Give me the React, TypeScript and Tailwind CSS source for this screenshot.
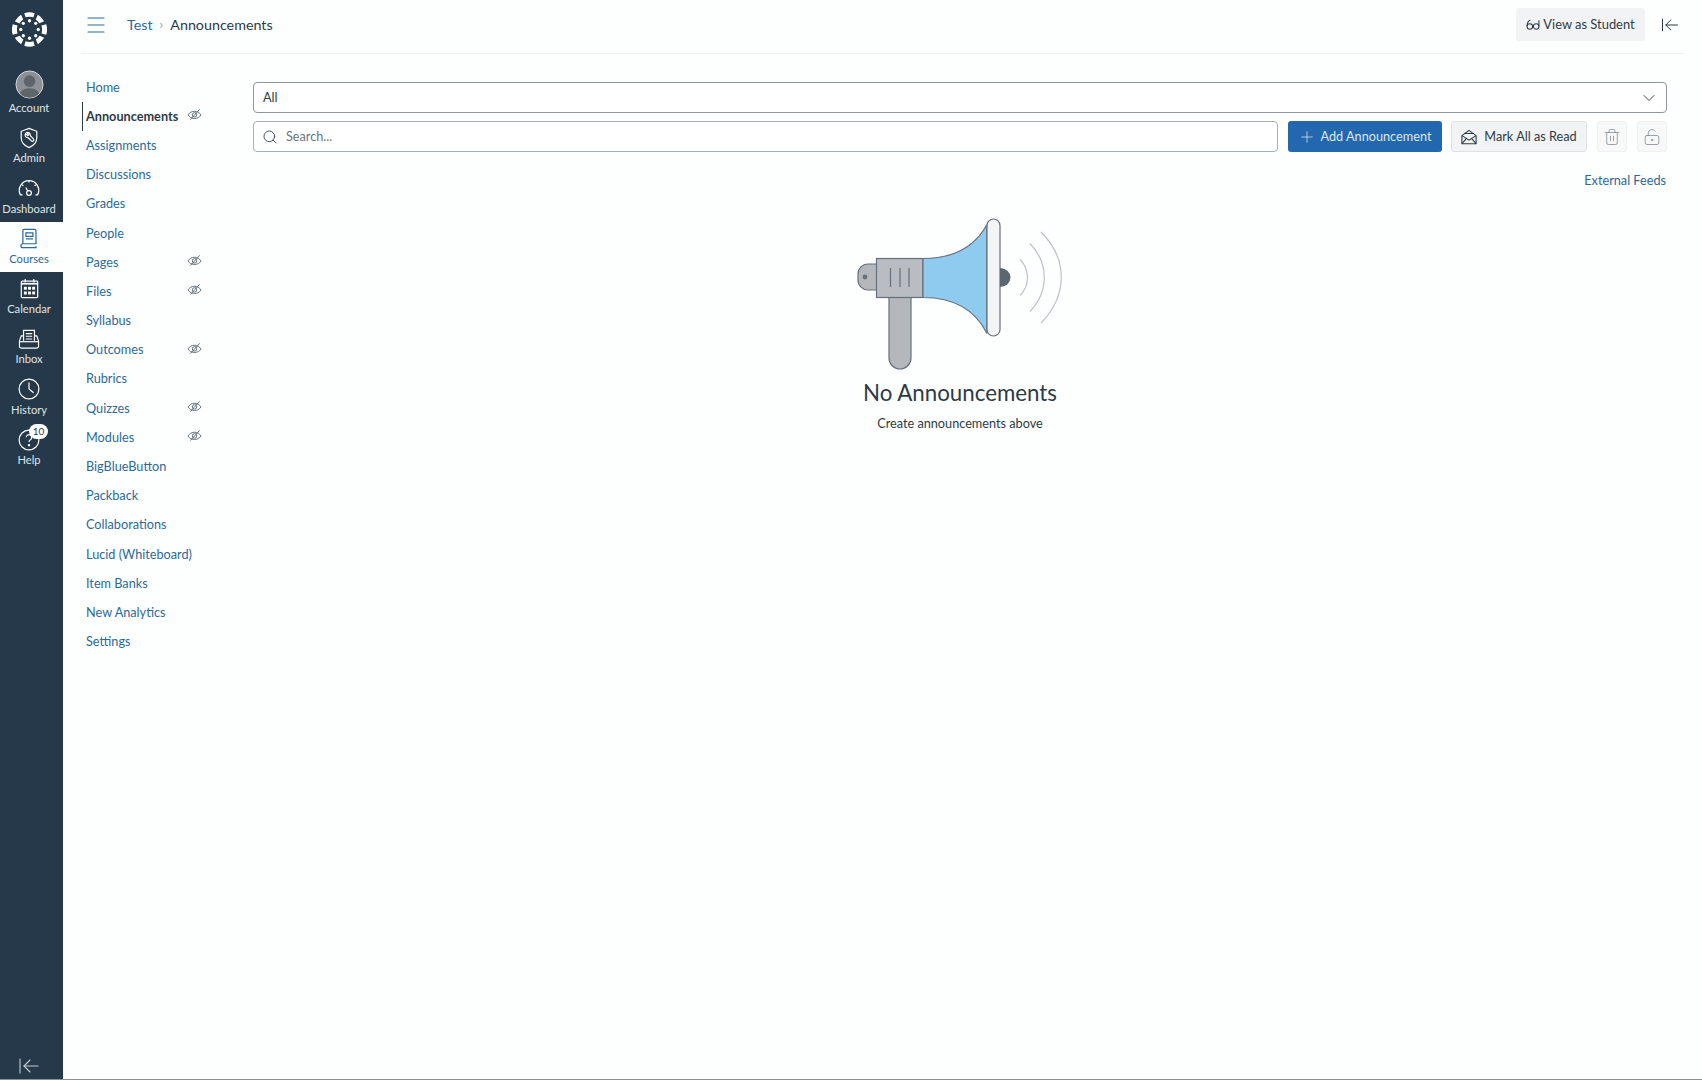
import { ReactNode } from "react";
import { ArrowLeftToLine, ChevronDown, LockKeyholeOpen, Menu, Plus, Search, Trash2 } from "lucide-react";

const courseNav = [
    { label: "Home" },
    { label: "Announcements", hidden: true, active: true },
    { label: "Assignments" },
    { label: "Discussions" },
    { label: "Grades" },
    { label: "People" },
    { label: "Pages", hidden: true },
    { label: "Files", hidden: true },
    { label: "Syllabus" },
    { label: "Outcomes", hidden: true },
    { label: "Rubrics" },
    { label: "Quizzes", hidden: true },
    { label: "Modules", hidden: true },
    { label: "BigBlueButton" },
    { label: "Packback" },
    { label: "Collaborations" },
    { label: "Lucid (Whiteboard)" },
    { label: "Item Banks" },
    { label: "New Analytics" },
    { label: "Settings" },
];

const CanvasLogo = () => (
    <svg viewBox="0 0 36 36" className="h-[35px] w-[35px]" fill="#fff">
        <path d="M12.6 1.2a17.6 17.6 0 0 1 10.8 0l-1.4 4.3a13 13 0 0 0-8 0z" />
        <path d="M26.6 2.9a17.6 17.6 0 0 1 6.5 6.5l-4.9 2.1a13 13 0 0 0-3.9-3.9z" />
        <path d="M35.2 12.6a17.6 17.6 0 0 1 0 10.8l-4.9-1.4a13 13 0 0 0 0-8z" />
        <path d="M33.1 26.6a17.6 17.6 0 0 1-6.5 6.5l-2.1-4.9a13 13 0 0 0 3.9-3.9z" />
        <path d="M23.4 34.8a17.6 17.6 0 0 1-10.8 0l1.4-4.6a13 13 0 0 0 8 0z" />
        <path d="M9.4 33.1a17.6 17.6 0 0 1-6.5-6.5l4.9-2.1a13 13 0 0 0 3.9 3.9z" />
        <path d="M.8 23.4a17.6 17.6 0 0 1 0-10.8l4.9 1.4a13 13 0 0 0 0 8z" />
        <path d="M2.9 9.4a17.6 17.6 0 0 1 6.5-6.5l2.1 4.9a13 13 0 0 0-3.9 3.9z" />
        <circle cx="18" cy="9" r="1.7" />
        <circle cx="24.4" cy="11.6" r="1.7" />
        <circle cx="27" cy="18" r="1.7" />
        <circle cx="24.4" cy="24.4" r="1.7" />
        <circle cx="18" cy="27" r="1.7" />
        <circle cx="11.6" cy="24.4" r="1.7" />
        <circle cx="9" cy="18" r="1.7" />
        <circle cx="11.6" cy="11.6" r="1.7" />
    </svg>
);

const AccountIcon = () => (
    <svg viewBox="0 0 30 30" className="h-[29px] w-[29px]">
        <defs>
            <clipPath id="avatar">
                <circle cx="15" cy="15" r="13.6" />
            </clipPath>
        </defs>
        <circle cx="15" cy="15" r="14" fill="#8b9096" stroke="#d6dade" strokeWidth="1" />
        <g clipPath="url(#avatar)" fill="#5f6468">
            <circle cx="15" cy="11.5" r="6" />
            <path d="M4 30c0-8 5-11 11-11s11 3 11 11z" />
        </g>
    </svg>
);

const AdminIcon = () => (
    <svg viewBox="0 0 24 24" className="h-[22px] w-[22px]" fill="none" stroke="#fff" strokeWidth="1.3">
        <path d="M12 1.5l8.5 3.2v7c0 5-3.5 8.6-8.500 10.800-5-2.200-8.500-5.800-8.500-10.800v-7z" />
        <path d="M8.200 7.200l2.400 2.200 1-1-2.200-2.400a3 3 0 0 1 4 3.400l3.400 3.600a1.500 1.500 0 0 1-2.200 2.200l-3.500-3.500a3 3 0 0 1-2.900-4.500z" />
    </svg>
);

const DashboardIcon = () => (
    <svg viewBox="0 0 24 20" className="h-[20px] w-[22px]" fill="none" stroke="#fff" strokeWidth="1.3">
        <path d="M5 17.500H2.600A10.600 10.600 0 0 1 12 2a10.600 10.600 0 0 1 9.400 15.500H19" />
        <path d="M12 2v2M4.500 6.500l1.400 1.200M19.500 6.500l-1.400 1.200" />
        <circle cx="12" cy="15.500" r="2.600" />
        <path d="M8.500 9.500l2.200 3.800" />
    </svg>
);

const CoursesIcon = () => (
    <svg viewBox="0 0 20 24" className="h-[21px] w-[18px]" fill="none" stroke="#2d6a97" strokeWidth="1.400">
        <path d="M3 18V3a1.500 1.500 0 0 1 1.500-1.500h12A1.500 1.500 0 0 1 18 3v15z" />
        <path d="M3 18a2.200 2.200 0 0 0 0 4.400h15v-1.600" />
        <path d="M6.500 5.500h8v4h-8zM6.500 12.500h8" />
    </svg>
);

const CalendarIcon = () => (
    <svg viewBox="0 0 22 24" className="h-[21px] w-[19px]" fill="none" stroke="#fff" strokeWidth="1.400">
        <rect x="1.500" y="3.500" width="19" height="19" rx="1" />
        <path d="M6 1v4M16 1v4" />
        <path d="M1.500 6.500h19" strokeWidth="2" />
        <g fill="#fff" stroke="none">
            <rect x="4.500" y="10" width="3.400" height="3.400" />
            <rect x="9.300" y="10" width="3.400" height="3.400" />
            <rect x="14.100" y="10" width="3.400" height="3.400" />
            <rect x="4.500" y="15.500" width="3.400" height="3.400" />
            <rect x="9.300" y="15.500" width="3.400" height="3.400" />
            <rect x="14.100" y="15.500" width="3.400" height="3.400" />
        </g>
    </svg>
);

const InboxIcon = () => (
    <svg viewBox="0 0 24 22" className="h-[20px] w-[22px]" fill="none" stroke="#fff" strokeWidth="1.300">
        <path d="M6 13V1.500h12V13" />
        <path d="M8.500 5h7M8.500 8h7M8.500 11h7" />
        <path d="M6 7.500H3.500L1.500 13v6a2 2 0 0 0 2 2h17a2 2 0 0 0 2-2v-6l-2-5.500H18" />
        <path d="M1.500 14h21" />
    </svg>
);

const HistoryIcon = () => (
    <svg viewBox="0 0 24 24" className="h-[22px] w-[22px]" fill="none" stroke="#fff" strokeWidth="1.300">
        <circle cx="12" cy="12" r="10.800" />
        <path d="M12 5v7l5 4" />
    </svg>
);

const HelpIcon = () => (
    <svg viewBox="0 0 24 24" className="h-[22px] w-[22px]" fill="none" stroke="#fff" strokeWidth="1.300">
        <circle cx="12" cy="12" r="10.800" />
        <path d="M9 9a3 3 0 1 1 4.600 2.600c-1 .7-1.600 1.300-1.600 2.600" />
        <circle cx="12" cy="17.600" r=".7" fill="#fff" />
    </svg>
);

const HiddenIcon = () => (
    <svg viewBox="0 0 16 14" className="-mt-[3px] mr-[1px] h-[13px] w-[15px]" fill="none" stroke="#5b6770" strokeWidth="1">
        <path d="M1 7.500c1.800-2.600 4-4 7-4s5.200 1.400 7 4c-1.800 2.600-4 3.800-7 3.800S2.800 10.100 1 7.500z" />
        <circle cx="8" cy="7.400" r="2.400" />
        <path d="M3.500 12.500L13.500 1.500" />
    </svg>
);

const GlassesIcon = () => (
    <svg viewBox="0 0 16 14" className="h-[12px] w-[14px]" fill="none" stroke="#2d3b45" strokeWidth="1.200">
        <circle cx="4.300" cy="8.800" r="3.200" />
        <circle cx="11.700" cy="8.800" r="3.200" />
        <path d="M1.100 8.500C1.100 4.500 2.500 2 5 1.500M14.900 8.500V1.500M7.500 8.500h1" />
    </svg>
);

const OpenMailIcon = () => (
    <svg viewBox="0 0 18 18" className="h-[16px] w-[16px]" fill="none" stroke="#2d3b45" strokeWidth="1.200">
        <path d="M1 7.500L9 1.500l8 6V16.500H1z" />
        <path d="M1 7.500l8 5 8-5M1 16.500l5.500-6.300M17 16.500l-5.500-6.300" />
        <path d="M4 5.500V5h10v.5" />
    </svg>
);

const Megaphone = () => (
    <svg viewBox="855 215 210 158" className="h-[158px] w-[210px]" stroke="#66717b" strokeWidth="1.200">
        <path d="M877 264h-9a10 10 0 0 0-10 10v6a10 10 0 0 0 10 10h9z" fill="#b4b7bc" />
        <circle cx="865" cy="277" r="2.400" fill="#66717b" stroke="none" />
        <path d="M889 297h22v61a11 11 0 0 1-22 0z" fill="#b4b7bc" />
        <rect x="876.500" y="258.500" width="46.500" height="39" fill="#b9bcc1" />
        <path d="M890.500 268v19M900 268v19M909 268v19" fill="none" />
        <path d="M923 258.500c30 0 52-12 64-34v109c-12-24-34-36-64-36z" fill="#8fcbee" />
        <rect x="987" y="219" width="13" height="117" rx="6.500" fill="#f3f4f6" />
        <path d="M1000 268a10.500 9.500 0 0 1 0 19z" fill="#5b6770" stroke="none" />
        <g fill="none" stroke="#bcc2c9">
            <path d="M1020 259.500c10 10 10 26 0 36" />
            <path d="M1030 243.500c19 20 19 48 0 68" />
            <path d="M1041 232c27 27 27 63 0 91" />
        </g>
    </svg>
);

const GlobalNavItem = ({ icon, label, active, badge }: { icon: ReactNode; label: string; active?: boolean; badge?: string }) => (
    <div className={`relative flex h-[50.300px] flex-col items-center pr-[5px] ${active ? "bg-[#fdfefe] text-[#2d6a97]" : "text-[#dfe4e8]"}`}>
        <div className="flex h-[30px] items-center justify-center pt-[3px]">{icon}</div>
        <span className="mt-[-1px] whitespace-nowrap text-[11.200px] leading-[16px]">{label}</span>
        {badge && (
            <span className="absolute left-[29px] top-[1px] flex h-[15px] w-[19px] items-center justify-center rounded-full bg-white text-[10px] text-[#2d3b45]">
                {badge}
            </span>
        )}
    </div>
);

const App = () => {
    return (
        <div className="flex h-[1080px] w-[1702px] overflow-hidden border-b border-[#8f8f8f] bg-[#fdfefe] font-['Lato','Open_Sans',sans-serif] text-[#2d3b45]">
            <aside className="flex w-[63px] shrink-0 flex-col bg-[#25394a]">
                <div className="flex h-[71px] justify-center pr-[5px] pt-[12px]">
                    <CanvasLogo />
                </div>
                <GlobalNavItem icon={<div className="-mt-[6px]"><AccountIcon /></div>} label="Account" />
                <GlobalNavItem icon={<AdminIcon />} label="Admin" />
                <GlobalNavItem icon={<DashboardIcon />} label="Dashboard" />
                <GlobalNavItem icon={<CoursesIcon />} label="Courses" active />
                <GlobalNavItem icon={<CalendarIcon />} label="Calendar" />
                <GlobalNavItem icon={<InboxIcon />} label="Inbox" />
                <GlobalNavItem icon={<HistoryIcon />} label="History" />
                <GlobalNavItem icon={<HelpIcon />} label="Help" badge="10" />
                <div className="mt-auto flex justify-center pb-[1px] pr-[5px]">
                    <ArrowLeftToLine size={24} strokeWidth={1.100} className="text-[#c3ccd4]" />
                </div>
            </aside>

            <div className="flex min-w-0 flex-1 flex-col">
                <header className="ml-[18px] mr-[17px] flex h-[54px] shrink-0 items-center border-b border-[#eef0f1] pb-[4px]">
                    <Menu size={24} strokeWidth={1.100} className="ml-[3px] text-[#2d6a97]" />
                    <nav className="ml-[19px] flex items-center text-[14.300px]">
                        <span className="text-[#2d6a97]">Test</span>
                        <span className="ml-[7px] mr-[7px] text-[13px] text-[#9aa3aa]">›</span>
                        <span>Announcements</span>
                    </nav>
                    <button className="ml-auto flex h-[33px] w-[129px] items-center justify-center gap-[3px] rounded-[3px] bg-[#f2f3f4] text-[12.900px]">
                        <GlassesIcon />
                        View as Student
                    </button>
                    <ArrowLeftToLine size={20} strokeWidth={1.200} className="ml-[15px] mr-[5px] text-[#2d3b45]" />
                </header>

                <div className="flex flex-1">
                    <nav className="w-[190px] shrink-0 pl-[19px] pt-[18.500px] text-[12.700px] text-[#2d6a97]">
                        {courseNav.map((item) => (
                            <div
                                key={item.label}
                                className={`flex h-[29.200px] w-[121px] items-center justify-between ${item.active ? "border-l border-[#2d3b45] pl-[3px] font-bold text-[#2d3b45]" : "pl-[4px]"}`}
                            >
                                <span className="whitespace-nowrap">{item.label}</span>
                                {item.hidden && <HiddenIcon />}
                            </div>
                        ))}
                    </nav>

                    <main className="flex w-[1414px] shrink-0 flex-col pt-[28px]">
                        <div className="flex h-[31px] items-center justify-between rounded-[4px] border border-[#8f979d] bg-white pl-[9px] pr-[7px] text-[12.700px]">
                            <span>All</span>
                            <ChevronDown size={20} strokeWidth={1.100} />
                        </div>

                        <div className="mt-[8px] flex h-[31px] items-stretch text-[12.700px]">
                            <div className="flex w-[1025px] items-center gap-[8px] rounded-[4px] border border-[#a9afb4] bg-white pl-[8px] text-[#6b7780]">
                                <Search size={16} strokeWidth={1.300} className="text-[#2d3b45]" />
                                Search...
                            </div>
                            <button className="ml-[10px] flex w-[154px] items-center justify-center gap-[5px] rounded-[3px] bg-[#2368ae] pr-[1px] text-[#dbe7f2]">
                                <Plus size={18} strokeWidth={1} />
                                Add Announcement
                            </button>
                            <button className="ml-[9px] flex w-[136px] items-center justify-center gap-[7px] rounded-[3px] border border-[#dfe2e4] bg-[#f2f3f4]">
                                <OpenMailIcon />
                                Mark All as Read
                            </button>
                            <button className="ml-[10px] flex w-[30px] items-center justify-center rounded-[3px] border border-[#f0f1f2] bg-[#f8f8f9] text-[#7d868d]">
                                <Trash2 size={18} strokeWidth={1} />
                            </button>
                            <button className="ml-[10px] flex w-[30px] items-center justify-center rounded-[3px] border border-[#f0f1f2] bg-[#f8f8f9] pr-[1px] text-[#7d868d]">
                                <LockKeyholeOpen size={18} strokeWidth={1} />
                            </button>
                        </div>

                        <div className="mt-[18px] pr-[1px] text-right text-[12.700px] leading-[20px] text-[#2d6a97]">External Feeds</div>

                        <div className="mt-[25px] flex flex-col items-center">
                            <Megaphone />
                            <h2 className="mt-[4px] text-[22.300px] leading-[32px]">No Announcements</h2>
                            <p className="mt-[4px] text-[12.700px] leading-[20px]">Create announcements above</p>
                        </div>
                    </main>
                </div>
            </div>
        </div>
    );
};

export default App;
